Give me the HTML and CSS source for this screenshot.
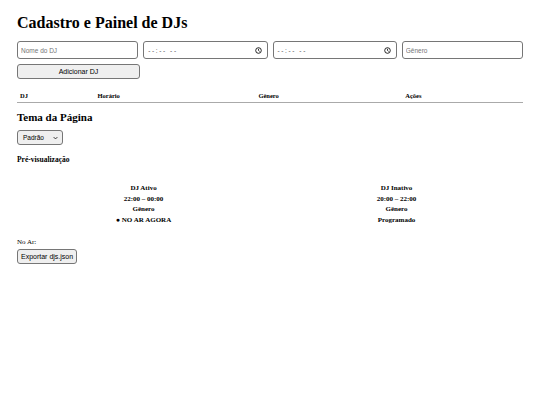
FILE: index.html
```html
<!DOCTYPE html>
<html lang="pt-BR">
<head>
<meta charset="utf-8">
<title>Cadastro e Painel de DJs</title>
<link rel="stylesheet" href="styles.css">
</head>
<body>
<main class="page">
  <h1 class="title">Cadastro e Painel de DJs</h1>
  <form class="form">
    <div class="inputs">
      <input class="field" type="text" placeholder="Nome do DJ">
      <div class="field time"><span class="time-text">--:-- --</span><svg class="clock" viewBox="0 0 10 10" width="7" height="7"><circle cx="5" cy="5" r="4" fill="none" stroke="#111" stroke-width="1.3"/><path d="M5 2.6V5l1.6 1.3" fill="none" stroke="#111" stroke-width="1.2"/></svg></div>
      <div class="field time"><span class="time-text">--:-- --</span><svg class="clock" viewBox="0 0 10 10" width="7" height="7"><circle cx="5" cy="5" r="4" fill="none" stroke="#111" stroke-width="1.3"/><path d="M5 2.6V5l1.6 1.3" fill="none" stroke="#111" stroke-width="1.2"/></svg></div>
      <input class="field" type="text" placeholder="Gênero">
    </div>
    <div class="actions">
      <button class="btn add" type="button">Adicionar DJ</button>
    </div>
  </form>
  <table class="table">
    <thead>
      <tr><th class="c1">DJ</th><th class="c2">Horário</th><th class="c3">Gênero</th><th class="c4">Ações</th></tr>
    </thead>
  </table>
  <h2 class="section">Tema da Página</h2>
  <div class="select">Padrão<svg class="chev" viewBox="0 0 8 5" width="5" height="4"><path d="M1 1l3 3 3-3" fill="none" stroke="#222" stroke-width="1.4"/></svg></div>
  <h3 class="sub">Pré-visualização</h3>
  <div class="preview">
    <div class="card">
      <div>DJ Ativo</div>
      <div>22:00 – 00:00</div>
      <div>Gênero</div>
      <div>● NO AR AGORA</div>
    </div>
    <div class="card">
      <div>DJ Inativo</div>
      <div>20:00 – 22:00</div>
      <div>Gênero</div>
      <div>Programado</div>
    </div>
  </div>
  <div class="onair">No Ar:</div>
  <button class="btn export" type="button">Exportar djs.json</button>
</main>
</body>
</html>
```
FILE: styles.css
```css
html, body { margin: 0; padding: 0; background: #fff; }
body { font-family: "Liberation Serif", serif; color: #000; }
.page { padding: 14px 17px 0 17px; width: 506px; }
.title { font-size: 16px; font-weight: bold; margin: 0; line-height: 18px; height: 18px; }
.form { margin-top: 9px; }
.inputs { display: flex; gap: 5px; }
.field {
  box-sizing: border-box; flex: 1 1 0; min-width: 0; height: 18px;
  border: 1px solid #767676; border-radius: 3px; background: #fff;
  font-family: "Liberation Sans", sans-serif; font-size: 6.5px; padding: 0 3px; margin: 0;
  outline: none;
}
.field::placeholder { color: #757575; }
.time { display: flex; align-items: center; justify-content: space-between; padding: 0 5px 0 4px; }
.time-text { color: #555; letter-spacing: 1.6px; }
.clock { display: block; }
.actions { margin-top: 5px; display: flex; }
.btn {
  box-sizing: border-box; background: #efefef; border: 1px solid #767676; border-radius: 3px;
  font-family: "Liberation Sans", sans-serif; font-size: 7px; color: #000; padding: 0; margin: 0;
  white-space: nowrap;
}
.add { width: 123px; height: 15px; }
.table { width: 506px; border-collapse: collapse; margin-top: 8px; table-layout: fixed; }
.table th {
  text-align: left; font-size: 6.5px; font-weight: bold; height: 13px; padding: 2px 3px 0 3px;
  border-bottom: 1px solid #aaa; vertical-align: middle;
}
.c1 { width: 71px; }
.c2 { width: 154px; }
.c3 { width: 140px; }
.c4 { width: 114px; }
.section { font-size: 11px; font-weight: bold; margin: 8px 0 0 0; line-height: 12px; }
.select {
  box-sizing: border-box; width: 46px; height: 15px; margin-top: 7px;
  border: 1px solid #767676; border-radius: 3px; background: #efefef;
  font-family: "Liberation Sans", sans-serif; font-size: 6.5px;
  display: flex; align-items: center; justify-content: space-between; padding: 0 4px 0 5px;
}
.chev { display: block; }
.sub { font-size: 7.5px; font-weight: bold; margin: 10px 0 0 0; line-height: 9px; }
.preview { display: flex; margin-top: 19px; }
.card { flex: 1 1 0; text-align: center; font-size: 7px; font-weight: bold; line-height: 10.5px; }
.onair { font-size: 7px; margin-top: 14px; line-height: 6px; }
.export { height: 15px; padding: 0 3px; margin-top: 1px; }
```
